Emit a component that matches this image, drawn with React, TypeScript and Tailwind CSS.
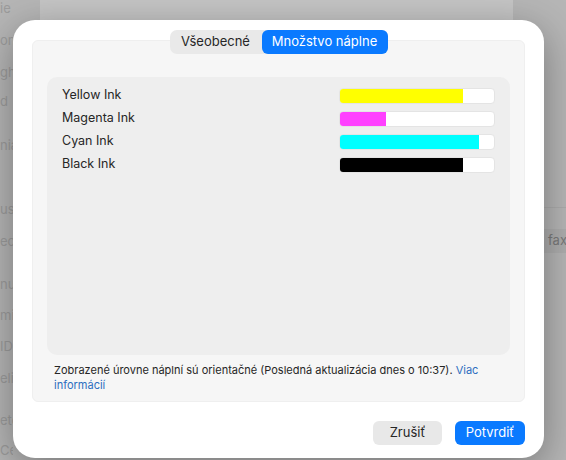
import React from 'react';

const inks = [
  { name: 'Yellow Ink', level: 80, color: 'bg-[#ffff00]' },
  { name: 'Magenta Ink', level: 30, color: 'bg-[#ff40ff]' },
  { name: 'Cyan Ink', level: 90, color: 'bg-[#00ffff]' },
  { name: 'Black Ink', level: 80, color: 'bg-black' },
];

const leftBits = [
  { t: 'ie', y: 'top-[0px]' },
  { t: 'on', y: 'top-[32px]' },
  { t: 'gh', y: 'top-[64px]' },
  { t: 'd', y: 'top-[93px]' },
  { t: 'nia', y: 'top-[137px]' },
  { t: 'us', y: 'top-[201px]' },
  { t: 'ec', y: 'top-[233px]' },
  { t: 'nut', y: 'top-[276px]' },
  { t: 'mi', y: 'top-[307px]' },
  { t: 'ID', y: 'top-[338px]' },
  { t: 'eli', y: 'top-[370px]' },
  { t: 'etc', y: 'top-[412px]' },
  { t: 'Ce', y: 'top-[442px]' },
];

function InkRow({ name, level, color }: { name: string; level: number; color: string }) {
  return (
    <div className="flex items-center justify-between h-[23px]">
      <span className="text-[12.5px] text-[#262626]">{name}</span>
      <div className="w-[156px] h-[16px] rounded-[4px] bg-white border border-[#e4e4e4] overflow-hidden">
        <div className={`h-full ${color}`} style={{ width: `${level}%` }} />
      </div>
    </div>
  );
}

export default function App() {
  return (
    <div
      className="relative w-[566px] h-[460px] bg-[#b6b6b6] overflow-hidden flex"
      style={{ fontFamily: 'Inter, "Noto Sans", sans-serif' }}
    >
      {/* window behind the sheet */}
      <div className="absolute left-[40px] top-[-40px] w-[473px] h-[120px] rounded-[24px] bg-[#c5c5c5]" />

      {/* faded sidebar of the parent window */}
      <div className="relative w-[13px] h-full overflow-hidden text-[13px] text-[#9c9c9c]">
        {leftBits.map((b) => (
          <span key={b.t + b.y} className={`absolute left-0 ${b.y} leading-[16px] whitespace-nowrap`}>
            {b.t}
          </span>
        ))}
      </div>

      {/* sheet */}
      <div className="relative z-10 mt-[20px] w-[531px] h-[438px] rounded-[22px] bg-white shadow-[0_10px_40px_rgba(0,0,0,0.35)] flex flex-col px-[19px] pt-[10px]">
        <div className="relative flex flex-col">
          <div className="absolute left-0 right-0 top-[10px] h-[362px] rounded-[6px] bg-[#f6f6f6] border border-[#efefef]" />
          <div className="relative z-10 self-center flex h-[24px] rounded-[7px] bg-[#e9e9e9] text-[13px]">
            <div className="w-[92px] flex items-center justify-center text-[#262626]">Všeobecné</div>
            <div className="w-[126px] flex items-center justify-center rounded-[6px] bg-[#0a7aff] text-white">
              Množstvo náplne
            </div>
          </div>
          <div className="relative z-10 mx-[15px] mt-[23px] h-[278px] rounded-[10px] bg-[#eeeeee] px-[15px] pt-[7px] flex flex-col">
            {inks.map((i) => (
              <InkRow key={i.name} {...i} />
            ))}
          </div>
          <p className="relative z-10 px-[22px] mt-[8px] text-[11px] leading-[15px] text-[#262626]">
            Zobrazené úrovne náplní sú orientačné (Posledná aktualizácia dnes o 10:37).{' '}
            <span className="text-[#2d6ec0]">Viac informácií</span>
          </p>
        </div>
        <div className="mt-auto mb-[13px] flex justify-end gap-[13px]">
          <button className="w-[69px] h-[24px] rounded-[6px] bg-[#e8e8e8] text-[13px] text-[#262626]">Zrušiť</button>
          <button className="w-[70px] h-[24px] rounded-[6px] bg-[#0a7aff] text-[13px] text-white">Potvrdiť</button>
        </div>
      </div>

      {/* right part of parent window */}
      <div className="relative flex-1 h-full">
        <div className="absolute left-0 right-0 top-[207px] h-px bg-[#acacac]" />
        <div className="absolute left-0 right-0 top-[229px] h-[24px] bg-[#aeaeae] flex items-center pl-[4px] text-[13px] text-[#7a7a7a]">
          fax
        </div>
      </div>
    </div>
  );
}
